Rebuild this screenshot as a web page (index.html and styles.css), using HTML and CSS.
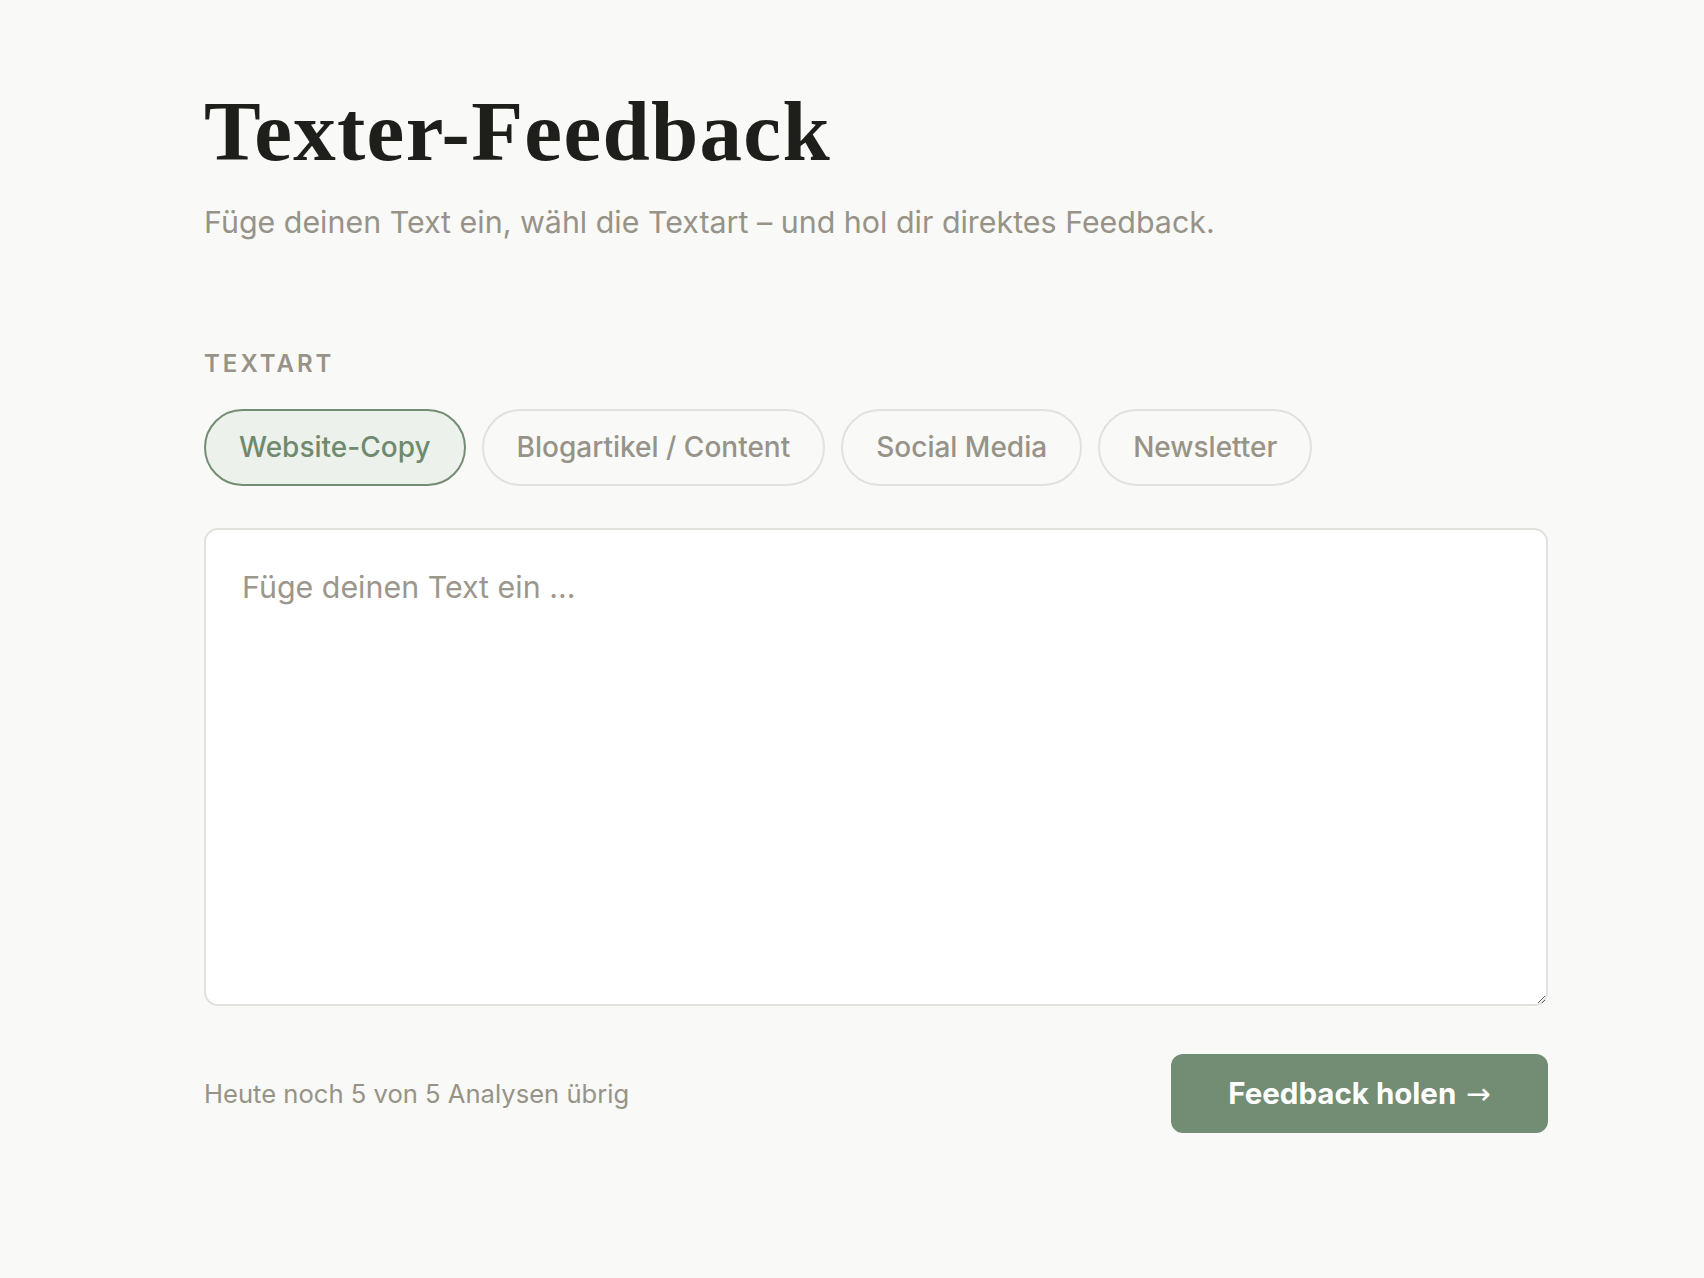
FILE: index.html
```html
<!DOCTYPE html>
<html lang="de">

<head>
    <meta charset="utf-8">
    <meta name="viewport" content="width=device-width, initial-scale=1.0">
    <title>Texter-Feedback</title>
    <link rel="stylesheet" href="styles.css">
</head>

<body>
    <main class="page">
        <h1 class="title">Texter-Feedback</h1>
        <p class="intro">Füge deinen Text ein, wähl die Textart – und hol dir direktes Feedback.</p>

        <form id="feedbackForm" class="feedback">
            <span class="label">Textart</span>
            <div class="chips">
                <button type="button" class="chip active">Website-Copy</button>
                <button type="button" class="chip">Blogartikel / Content</button>
                <button type="button" class="chip">Social Media</button>
                <button type="button" class="chip">Newsletter</button>
            </div>

            <textarea class="text-input" name="text" placeholder="Füge deinen Text ein ..."></textarea>

            <div class="footer">
                <span class="quota">Heute noch 5 von 5 Analysen übrig</span>
                <button type="submit" class="submit">Feedback holen <span class="arrow">→</span></button>
            </div>
        </form>
    </main>

    <script>
        const chips = document.querySelectorAll('.chip');

        // Only one text type can be active at a time
        chips.forEach((chip) => {
            chip.addEventListener('click', () => {
                chips.forEach((c) => c.classList.remove('active'));
                chip.classList.add('active');
            });
        });

        document.querySelector('#feedbackForm').addEventListener('submit', (e) => {
            e.preventDefault();
        });
    </script>
</body>

</html>
```

FILE: styles.css
```css
* {
    box-sizing: border-box;
}

body {
    margin: 0;
    background-color: #f9f9f7;
    font-family: Inter, "Noto Sans", Arial, sans-serif;
    color: #1f1f1c;
}

.page {
    max-width: 1392px;
    margin: 0 auto;
    padding: 85px 0 80px 48px;
}

.title {
    margin: 0;
    font-family: "Liberation Serif", "Times New Roman", serif;
    font-size: 85px;
    font-weight: bold;
    line-height: 1.1;
    letter-spacing: 1.3px;
    color: #1e1e1b;
}

.intro {
    margin: 24px 0 0;
    font-size: 30.4px;
    line-height: 1.3;
    color: #979388;
}

.feedback {
    margin-top: 108px;
}

.label {
    display: block;
    font-size: 24px;
    font-weight: 600;
    line-height: 1.2;
    letter-spacing: 3px;
    text-transform: uppercase;
    color: #979388;
}

.chips {
    display: flex;
    flex-wrap: wrap;
    gap: 16px;
    margin-top: 30px;
}

.chip {
    height: 77px;
    padding: 0 33px;
    border: 2.5px solid #e3e1dd;
    border-radius: 999px;
    background: transparent;
    font-family: inherit;
    font-size: 28px;
    font-weight: 500;
    color: #979388;
    cursor: pointer;
}

.chip.active {
    border-color: #748c73;
    background-color: #edf1eb;
    color: #6f8a6e;
}

.text-input {
    display: block;
    width: 100%;
    height: 478px;
    margin-top: 42px;
    padding: 35px 36px;
    border: 2px solid #e3e1dd;
    border-radius: 14px;
    background: #fff;
    font-family: inherit;
    font-size: 30.4px;
    line-height: 1.5;
    color: #1f1f1c;
    resize: vertical;
}

.text-input::placeholder {
    color: #9c978c;
}

.footer {
    display: flex;
    justify-content: space-between;
    align-items: center;
    margin-top: 48px;
}

.quota {
    font-size: 25.6px;
    color: #979388;
}

.submit {
    height: 79px;
    padding: 0 57px;
    border: none;
    border-radius: 12px;
    background-color: #738c74;
    font-family: inherit;
    font-size: 29.5px;
    font-weight: 700;
    color: #fff;
    cursor: pointer;
}

.arrow {
    margin-left: 3px;
    font-family: "DejaVu Sans", sans-serif;
    font-weight: normal;
}
```
